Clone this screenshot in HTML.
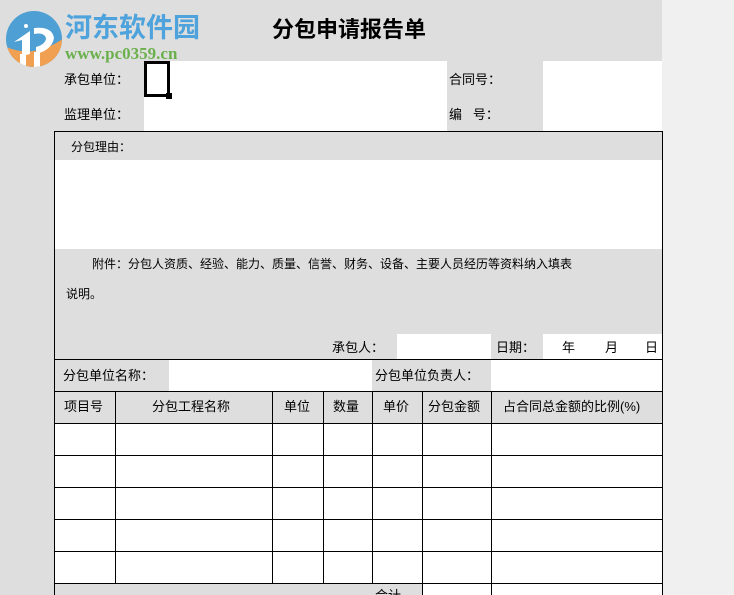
<!DOCTYPE html>
<html><head><meta charset="utf-8"><style>
*{margin:0;padding:0;box-sizing:border-box}
html,body{width:734px;height:595px;overflow:hidden}
body{background:#f0f0f0;position:relative;font-family:"Liberation Sans","Noto Sans CJK SC",sans-serif;font-size:13px;color:#000}
.a{position:absolute}
.g{background:#dedede}.w{background:#fff}
.hl{position:absolute;height:1px;background:#000}
.vl{position:absolute;width:1px;background:#000}
.t{position:absolute;white-space:nowrap;line-height:16px}
</style></head><body>
<div class="a g" style="left:0;top:0;width:662px;height:595px"></div>
<div class="a w" style="left:144px;top:61px;width:303px;height:70px"></div>
<div class="a w" style="left:543px;top:61px;width:119px;height:70px"></div>
<div class="a" style="left:144px;top:61px;width:26px;height:36px;border:3px solid #000"></div>
<div class="a" style="left:166px;top:93px;width:6px;height:6px;background:#000"></div>
<!-- logo -->
<svg class="a" style="left:4px;top:10px" width="60" height="58" viewBox="0 0 60 58">
<defs><clipPath id="c"><circle cx="30" cy="29" r="28"/></clipPath></defs>
<g clip-path="url(#c)">
<rect x="0" y="0" width="60" height="58" fill="#4e9fd4"/>
<path d="M0 36 Q30 50 60 28 L60 58 L0 58Z" fill="#f0a050"/>
<rect x="16" y="44" width="6" height="14" fill="#fff"/>
<rect x="30" y="42" width="6" height="16" fill="#fff"/>
</g>
<path d="M10 32 L26 21 L26 44 L18 46 L18 30Z" fill="#fff"/>
<path d="M30 18 Q48 16 50 28 Q48 40 32 44 L32 37 Q42 34 42 28 Q40 22 30 24Z" fill="#fff"/>
<circle cx="22" cy="16" r="2" fill="#fff"/>
</svg>
<div class="t" style="left:65px;top:13px;font-size:27px;line-height:30px;font-weight:bold;color:#4fa3dc">河东软件园</div>
<div class="t" style="left:65px;top:46px;font-family:'Liberation Serif',serif;font-weight:bold;font-size:17px;color:#6ab04c">www.pc0359.cn</div>
<div class="t" style="left:272px;top:17px;font-size:22px;line-height:26px;font-weight:bold">分包申请报告单</div>
<div class="t" style="left:64px;top:72px">承包单位：</div>
<div class="t" style="left:64px;top:107px">监理单位：</div>
<div class="t" style="left:449px;top:72px">合同号：</div>
<div class="t" style="left:449px;top:107px">编&nbsp;&nbsp;&nbsp;号：</div>
<div class="a w" style="left:54px;top:160px;width:608px;height:89px"></div>
<div class="t" style="left:71px;top:139px;font-size:12px">分包理由：</div>
<div class="t" style="left:92px;top:256px;font-size:12px">附件：分包人资质、经验、能力、质量、信誉、财务、设备、主要人员经历等资料纳入填表</div>
<div class="t" style="left:66px;top:286px;font-size:12px">说明。</div>
<div class="a w" style="left:397px;top:334px;width:94px;height:25px"></div>
<div class="a w" style="left:543px;top:334px;width:119px;height:25px"></div>
<div class="t" style="left:332px;top:340px">承包人：</div>
<div class="t" style="left:496px;top:340px">日期：</div>
<div class="t" style="left:562px;top:340px">年</div>
<div class="t" style="left:605px;top:340px">月</div>
<div class="t" style="left:645px;top:340px">日</div>
<div class="a w" style="left:169px;top:360px;width:203px;height:31px"></div>
<div class="a w" style="left:491px;top:360px;width:171px;height:31px"></div>
<div class="t" style="left:63px;top:368px">分包单位名称：</div>
<div class="t" style="left:375px;top:368px">分包单位负责人：</div>
<div class="a w" style="left:54px;top:423px;width:608px;height:160px"></div>
<div class="a w" style="left:422px;top:583px;width:240px;height:12px"></div>
<div class="t" style="left:64px;top:399px">项目号</div>
<div class="t" style="left:152px;top:399px">分包工程名称</div>
<div class="t" style="left:284px;top:399px">单位</div>
<div class="t" style="left:333px;top:399px">数量</div>
<div class="t" style="left:383px;top:399px">单价</div>
<div class="t" style="left:428px;top:399px">分包金额</div>
<div class="t" style="left:503px;top:399px">占合同总金额的比例(%)</div>
<div class="t" style="left:375px;top:588px">合计</div>
<div class="hl" style="left:54px;top:131px;width:609px"></div>
<div class="vl" style="left:54px;top:131px;height:464px"></div>
<div class="vl" style="left:662px;top:131px;height:464px"></div>
<div class="hl" style="left:54px;top:359px;width:609px"></div>
<div class="hl" style="left:54px;top:391px;width:609px"></div>
<div class="hl" style="left:54px;top:423px;width:609px"></div>
<div class="hl" style="left:54px;top:455px;width:609px"></div>
<div class="hl" style="left:54px;top:487px;width:609px"></div>
<div class="hl" style="left:54px;top:519px;width:609px"></div>
<div class="hl" style="left:54px;top:551px;width:609px"></div>
<div class="hl" style="left:54px;top:583px;width:609px"></div>
<div class="vl" style="left:115px;top:391px;height:192px"></div>
<div class="vl" style="left:272px;top:391px;height:192px"></div>
<div class="vl" style="left:323px;top:391px;height:192px"></div>
<div class="vl" style="left:372px;top:391px;height:192px"></div>
<div class="vl" style="left:422px;top:391px;height:204px"></div>
<div class="vl" style="left:491px;top:391px;height:204px"></div>
</body></html>
